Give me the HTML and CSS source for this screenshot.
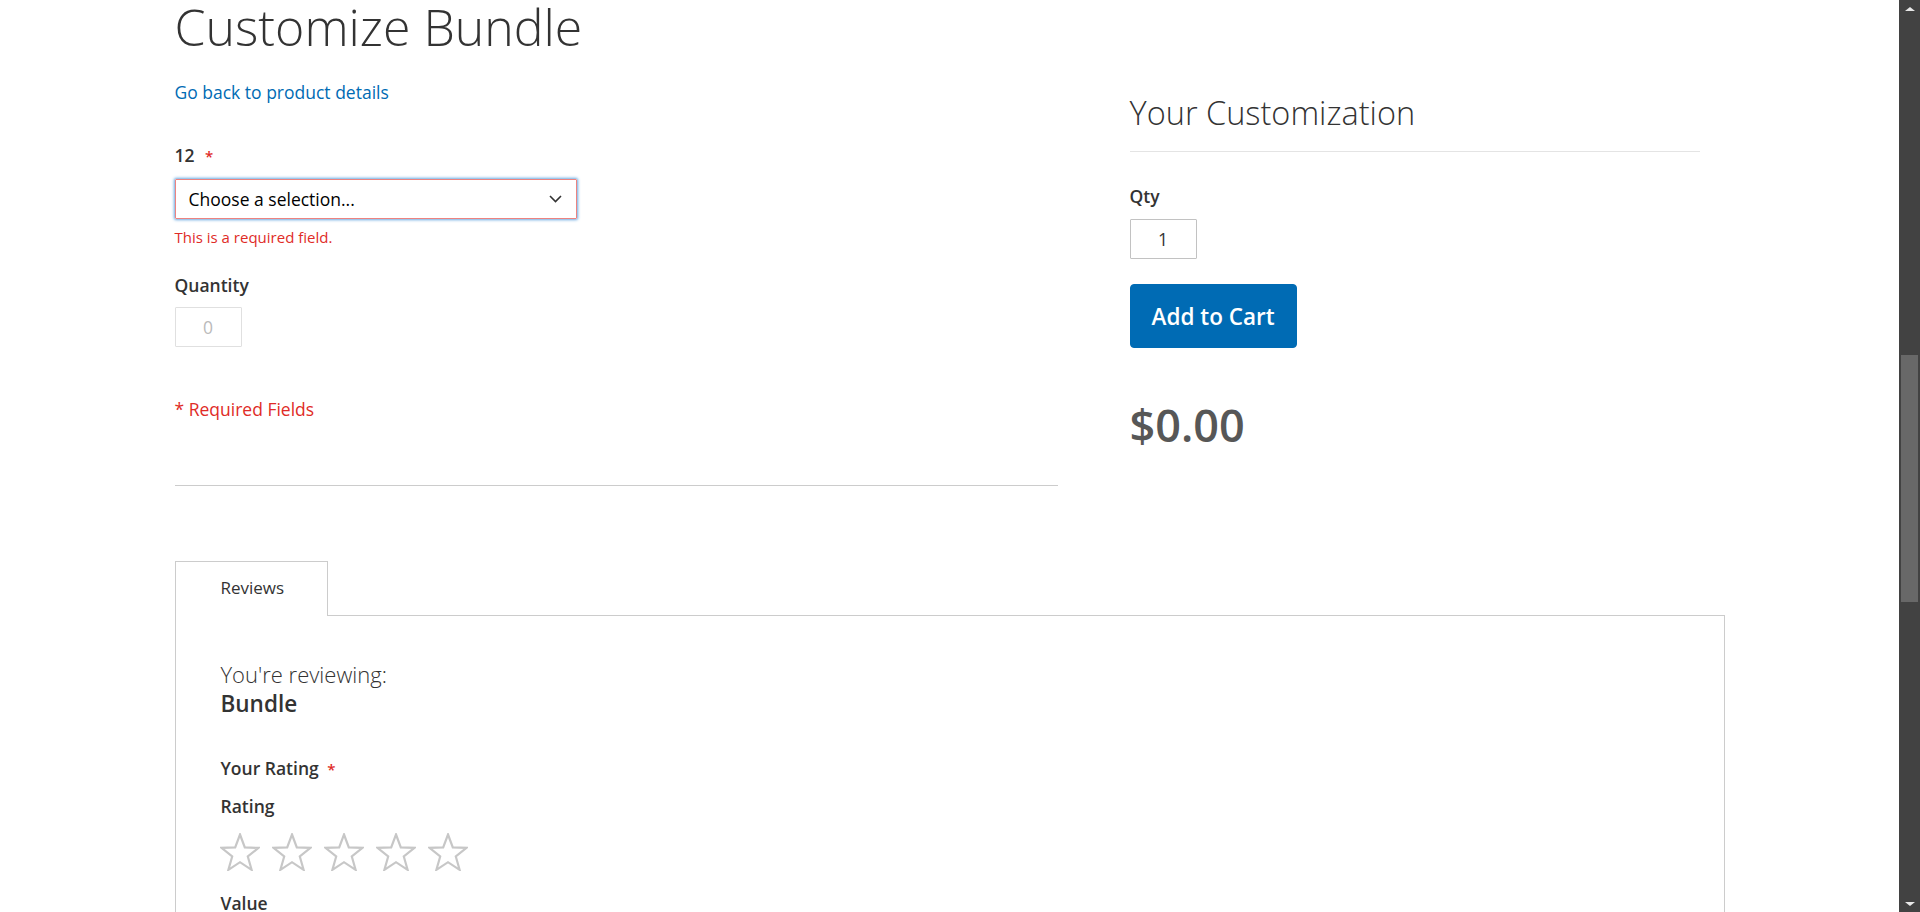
FILE: index.html
```html
<!DOCTYPE html>
<html lang="en">
<head>
<meta charset="utf-8">
<title>Customize Bundle</title>
<link rel="stylesheet" href="styles.css">
</head>
<body>
<div class="viewport">
  <div class="page">
    <main class="page-main">
      <div class="bundle-container">
        <div class="options-col">
          <h1 class="page-title">Customize Bundle</h1>
          <a class="back-link" href="#">Go back to product details</a>

          <div class="field field-select">
            <label class="label">12 <span class="req">*</span></label>
            <div class="select-box">
              <span class="select-text">Choose a selection...</span>
              <svg class="chevron" width="13" height="8" viewBox="0 0 13 8"><polyline points="1,1 6.5,6.5 12,1" fill="none" stroke="#333" stroke-width="1.6"/></svg>
            </div>
            <div class="field-error">This is a required field.</div>
          </div>

          <div class="field field-qty">
            <label class="label">Quantity</label>
            <div class="qty-box qty-disabled">0</div>
          </div>

          <div class="required-note">* Required Fields</div>
          <div class="options-divider"></div>
        </div>

        <aside class="summary-col">
          <div class="summary-title">Your Customization</div>
          <div class="field field-summary-qty">
            <label class="label">Qty</label>
            <div class="qty-box">1</div>
          </div>
          <button class="btn-primary" type="button">Add to Cart</button>
          <div class="price">$0.00</div>
        </aside>
      </div>

      <section class="tabs">
        <div class="tab-header">
          <div class="tab-title">Reviews</div>
          <div class="tab-filler"></div>
        </div>
        <div class="tab-content">
          <div class="review-legend">
            <span class="legend-lead">You're reviewing:</span>
            <strong class="legend-name">Bundle</strong>
          </div>
          <div class="rating-label">Your Rating <span class="req">*</span></div>
          <div class="rating-name">Rating</div>
          <div class="stars">
            <svg class="star" width="40" height="38" viewBox="0 0 40 38"><polygon points="20,1.5 24.8,14.4 38.5,14.9 27.8,23.5 31.6,36.8 20,29.2 8.4,36.8 12.2,23.5 1.5,14.9 15.2,14.4"/></svg>
            <svg class="star" width="40" height="38" viewBox="0 0 40 38"><polygon points="20,1.5 24.8,14.4 38.5,14.9 27.8,23.5 31.6,36.8 20,29.2 8.4,36.8 12.2,23.5 1.5,14.9 15.2,14.4"/></svg>
            <svg class="star" width="40" height="38" viewBox="0 0 40 38"><polygon points="20,1.5 24.8,14.4 38.5,14.9 27.8,23.5 31.6,36.8 20,29.2 8.4,36.8 12.2,23.5 1.5,14.9 15.2,14.4"/></svg>
            <svg class="star" width="40" height="38" viewBox="0 0 40 38"><polygon points="20,1.5 24.8,14.4 38.5,14.9 27.8,23.5 31.6,36.8 20,29.2 8.4,36.8 12.2,23.5 1.5,14.9 15.2,14.4"/></svg>
            <svg class="star" width="40" height="38" viewBox="0 0 40 38"><polygon points="20,1.5 24.8,14.4 38.5,14.9 27.8,23.5 31.6,36.8 20,29.2 8.4,36.8 12.2,23.5 1.5,14.9 15.2,14.4"/></svg>
          </div>
          <div class="rating-name rating-value">Value</div>
        </div>
      </section>
    </main>
  </div>
  <div class="scrollbar">
    <div class="sb-arrow sb-up"></div>
    <div class="sb-track"><div class="sb-thumb"></div></div>
    <div class="sb-arrow sb-down"></div>
  </div>
</div>
</body>
</html>
```
FILE: styles.css
```css
* { box-sizing: border-box; }
html, body { margin: 0; padding: 0; }
body {
  font-family: "Open Sans", "Noto Sans", sans-serif;
  font-size: 17.5px;
  line-height: 25px;
  color: #333;
  background: #fff;
}
.viewport { display: flex; width: 1920px; height: 912px; overflow: hidden; }
.page { flex: 1; overflow: hidden; }
.page-main { max-width: 1600px; margin: 0 auto; padding: 0 25px; }

.bundle-container { display: flex; justify-content: space-between; align-items: flex-start; }
.options-col { width: 57%; }
.summary-col { width: 40%; margin-top: 82px; padding: 13px 25px 0; }

.page-title {
  margin: -7px 0 0;
  font-size: 50px;
  font-weight: 300;
  line-height: 68px;
  color: #333;
}
.back-link {
  display: block;
  margin-top: 19px;
  color: #006bb4;
  text-decoration: none;
}
.label { display: block; font-weight: 600; color: #333; }
.req { color: #e02b27; font-size: 15px; margin-left: 6px; }
.field-select { margin-top: 38px; }
.select-box {
  margin-top: 10px;
  width: 402px;
  height: 40px;
  border: 1px solid #ed8380;
  box-shadow: 0 0 3px 1px #68a8e0;
  border-radius: 1px;
  display: flex;
  align-items: center;
  justify-content: space-between;
  padding: 0 14px 0 13px;
  color: #000;
}
.chevron { display: block; }
.field-error {
  margin-top: 9px;
  font-size: 15px;
  line-height: 18px;
  color: #e02b27;
}
.field-qty { margin-top: 27px; }
.qty-box {
  margin-top: 9px;
  width: 67px;
  height: 40px;
  border: 1px solid #c2c2c2;
  border-radius: 1px;
  display: flex;
  align-items: center;
  justify-content: center;
  color: #333;
}
.qty-disabled { opacity: 0.5; color: #777; }
.required-note { margin-top: 50px; color: #e02b27; }
.options-divider { margin-top: 63px; border-top: 1px solid #ccc; }

.summary-title {
  font-size: 32.5px;
  font-weight: 300;
  line-height: 36px;
  padding-bottom: 20px;
  border-bottom: 1px solid #e4e4e4;
}
.field-summary-qty { margin-top: 32px; }
.field-summary-qty .qty-box { margin-top: 10px; }
.btn-primary {
  display: block;
  margin-top: 25px;
  height: 64px;
  padding: 0 21px;
  background: #006bb4;
  border: 1px solid #006bb4;
  border-radius: 4px;
  color: #fff;
  font-family: "Open Sans", "Noto Sans", sans-serif;
  font-size: 22.5px;
  font-weight: 600;
  line-height: 27px;
}
.price {
  margin-top: 54px;
  font-size: 45px;
  line-height: 45px;
  font-weight: 600;
  color: #575757;
}

.tabs { margin-top: 75px; }
.tab-header { display: flex; height: 55px; }
.tab-title {
  width: 153px;
  padding-left: 45px;
  border: 1px solid #ccc;
  border-bottom: none;
  line-height: 52px;
  font-size: 17px;
  color: #333;
}
.tab-filler { flex: 1; border-bottom: 1px solid #ccc; }
.tab-content {
  border: 1px solid #ccc;
  border-top: none;
  padding: 43px 45px 60px;
  min-height: 400px;
}
.review-legend { display: flex; flex-direction: column; }
.legend-lead { font-size: 22px; font-weight: 300; line-height: 30px; }
.legend-name { font-size: 22.5px; font-weight: 600; line-height: 29px; }
.rating-label { margin-top: 38px; font-weight: 600; }
.rating-label .req { margin-left: 4px; }
.rating-name { margin-top: 12px; font-weight: 600; }
.rating-value { margin-top: 20px; }
.stars { display: flex; gap: 12px; margin-top: 14px; margin-left: -1px; }
.star polygon { fill: none; stroke: #c7c7c7; stroke-width: 2.2; stroke-linejoin: miter; }

.scrollbar {
  width: 21px;
  height: 912px;
  background: #424242;
  display: flex;
  flex-direction: column;
}
.sb-arrow { height: 17px; display: flex; align-items: center; justify-content: center; }
.sb-up::before {
  content: "";
  border-left: 5px solid transparent;
  border-right: 5px solid transparent;
  border-bottom: 4px solid #e8e8e8;
}
.sb-down::before {
  content: "";
  border-left: 5px solid transparent;
  border-right: 5px solid transparent;
  border-top: 4px solid #e8e8e8;
}
.sb-track { flex: 1; padding-top: 338px; padding-left: 2px; }
.sb-thumb { width: 17px; height: 247px; background: #686868; }
```
